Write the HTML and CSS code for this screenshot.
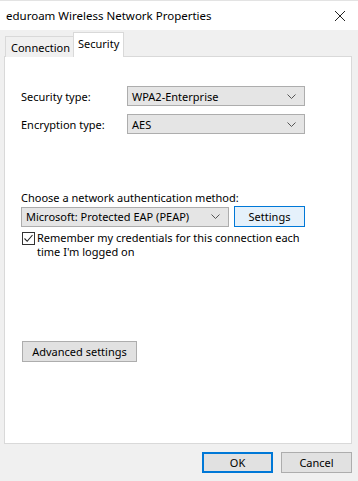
FILE: index.html
```html
<!DOCTYPE html>
<html lang="en">

<head>
    <meta charset="utf-8">
    <meta name="viewport" content="width=device-width, initial-scale=1.0">
    <title>eduroam Wireless Network Properties</title>
    <link rel="stylesheet" href="styles.css">
</head>

<body>

    <div class="window">
        <header class="titlebar">
            <span class="title">eduroam Wireless Network Properties</span>
            <svg class="close" width="12" height="12" viewBox="0 0 12 12">
                <path d="M1 1 L11 11 M11 1 L1 11" stroke="#222" stroke-width="1" fill="none" />
            </svg>
        </header>

        <nav class="tabs">
            <div class="tab">Connection</div>
            <div class="tab valgt">Security</div>
        </nav>

        <section class="panel">
            <div class="row">
                <label class="lbl">Security type:</label>
                <div class="combo wide">
                    <span>WPA2-Enterprise</span>
                    <svg class="chev" width="9" height="5" viewBox="0 0 9 5">
                        <path d="M0.5 0.5 L4.5 4.5 L8.5 0.5" stroke="#555" fill="none" />
                    </svg>
                </div>
            </div>
            <div class="row second">
                <label class="lbl">Encryption type:</label>
                <div class="combo wide">
                    <span>AES</span>
                    <svg class="chev" width="9" height="5" viewBox="0 0 9 5">
                        <path d="M0.5 0.5 L4.5 4.5 L8.5 0.5" stroke="#555" fill="none" />
                    </svg>
                </div>
            </div>

            <p class="choose">Choose a network authentication method:</p>
            <div class="row">
                <div class="combo method">
                    <span>Microsoft: Protected EAP (PEAP)</span>
                    <svg class="chev" width="9" height="5" viewBox="0 0 9 5">
                        <path d="M0.5 0.5 L4.5 4.5 L8.5 0.5" stroke="#555" fill="none" />
                    </svg>
                </div>
                <button class="knap settings">Settings</button>
            </div>

            <div class="check">
                <span class="box">
                    <svg width="11" height="11" viewBox="0 0 11 11">
                        <path d="M1.5 5.5 L4.2 8.3 L9.5 2" stroke="#222" stroke-width="1.1" fill="none" />
                    </svg>
                </span>
                <span class="checktekst">Remember my credentials for this connection each time I'm logged on</span>
            </div>

            <button class="knap advanced">Advanced settings</button>
        </section>

        <footer class="bund">
            <button class="knap ok">OK</button>
            <button class="knap">Cancel</button>
        </footer>
    </div>

</body></html>
```

FILE: styles.css
```css
body {
    box-sizing: border-box;
    margin: 0;
    font-family: "Noto Sans", "Open Sans", sans-serif;
    font-size: 11px;
    color: #000;
    background: #f0f0f0;
}

.window {
    width: 358px;
    height: 481px;
    background: #f0f0f0;
    display: flex;
    flex-direction: column;
}

.titlebar {
    height: 29px;
    border-top: 1px solid #e3e3e3;
    background: #fff;
    display: flex;
    align-items: center;
    justify-content: space-between;
    padding: 0 12px 0 6px;
}

.title {
    font-size: 11.5px;
}

.tabs {
    display: flex;
    align-items: flex-end;
    height: 24px;
    margin-top: 3px;
    padding-left: 5px;
    margin-bottom: -1px;
    position: relative;
    z-index: 1;
}

.tab {
    height: 20px;
    line-height: 21px;
    padding: 0 3px 0 5px;
    border: 1px solid #d9d9d9;
    border-bottom: none;
    border-right: none;
    background: #f0f0f0;
}

.tab.valgt {
    height: 24px;
    line-height: 22px;
    padding: 0 4px;
    background: #fff;
    border-right: 1px solid #d9d9d9;
}

.panel {
    height: 388px;
    box-sizing: border-box;
    margin: 0 6px 0 4px;
    border: 1px solid #d9d9d9;
    background: #fff;
    padding: 29px 0 0 16px;
    display: flex;
    flex-direction: column;
    align-items: flex-start;
}

.row {
    display: flex;
    align-items: center;
}

.row.second {
    margin-top: 8px;
}

.lbl {
    width: 106px;
}

.combo {
    height: 20px;
    box-sizing: border-box;
    border: 1px solid #adadad;
    background: #e5e5e5;
    display: flex;
    align-items: center;
    justify-content: space-between;
    padding: 0 8px 0 4px;
}

.combo.wide {
    width: 178px;
}

.combo.method {
    width: 208px;
}

.chev {
    flex-shrink: 0;
}

.choose {
    margin: 56px 0 0 0;
    line-height: 16px;
}

.knap {
    font-family: inherit;
    font-size: 11px;
    color: #000;
    height: 21px;
    box-sizing: border-box;
    border: 1px solid #adadad;
    background: #e1e1e1;
    padding: 0;
}

.settings {
    width: 71px;
    margin-left: 5px;
    background: #e5f1fb;
    border-color: #0078d7;
}

.check {
    display: flex;
    align-items: flex-start;
    margin-top: 4px;
    width: 300px;
}

.box {
    width: 13px;
    height: 13px;
    box-sizing: border-box;
    border: 1px solid #333;
    margin: 1px 2px 0 1px;
    display: flex;
    align-items: center;
    justify-content: center;
}

.checktekst {
    line-height: 14px;
    width: 268px;
}

.advanced {
    width: 115px;
    margin: 82px 0 0 1px;
}

.bund {
    display: flex;
    justify-content: flex-end;
    gap: 8px;
    margin-top: 8px;
    padding-right: 6px;
}

.bund .knap {
    width: 71px;
}

.ok {
    border: 2px solid #0078d7;
}
```
